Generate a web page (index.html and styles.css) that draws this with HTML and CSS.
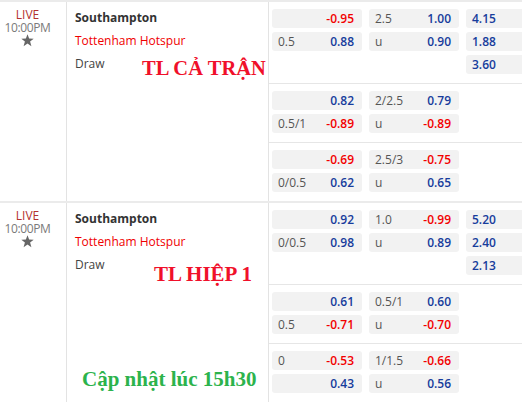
FILE: index.html
```html
<!DOCTYPE html>
<html>
<head>
<meta charset="utf-8">
<link rel="stylesheet" href="styles.css">
</head>
<body>
<div class="match">
  <div class="time">
    <div class="live">LIVE</div>
    <div class="clock">10:00PM</div>
    <svg class="star" viewBox="0 0 12 12" width="13" height="13"><path d="M6 0.3 L7.5 4.2 L11.7 4.4 L8.4 7 L9.6 11.2 L6 8.8 L2.4 11.2 L3.6 7 L0.3 4.4 L4.5 4.2 Z" fill="#666"/></svg>
  </div>
  <div class="teams">
    <div class="home">Southampton</div>
    <div class="away">Tottenham Hotspur</div>
    <div class="draw">Draw</div>
  </div>
  <div class="odds">
    <div class="sub">
      <div class="cell"><span class="lbl"></span><span class="val red">-0.95</span></div>
      <div class="cell"><span class="lbl">2.5</span><span class="val">1.00</span></div>
      <div class="cell x"><span class="val">4.15</span></div>
      <div class="cell"><span class="lbl">0.5</span><span class="val">0.88</span></div>
      <div class="cell"><span class="lbl">u</span><span class="val">0.90</span></div>
      <div class="cell x"><span class="val">1.88</span></div>
      <div class="blank"></div>
      <div class="blank"></div>
      <div class="cell x"><span class="val">3.60</span></div>
    </div>
    <div class="sub">
      <div class="cell"><span class="lbl"></span><span class="val">0.82</span></div>
      <div class="cell"><span class="lbl">2/2.5</span><span class="val">0.79</span></div>
      <div class="blank"></div>
      <div class="cell"><span class="lbl">0.5/1</span><span class="val red">-0.89</span></div>
      <div class="cell"><span class="lbl">u</span><span class="val red">-0.89</span></div>
      <div class="blank"></div>
    </div>
    <div class="sub">
      <div class="cell"><span class="lbl"></span><span class="val red">-0.69</span></div>
      <div class="cell"><span class="lbl">2.5/3</span><span class="val red">-0.75</span></div>
      <div class="blank"></div>
      <div class="cell"><span class="lbl">0/0.5</span><span class="val">0.62</span></div>
      <div class="cell"><span class="lbl">u</span><span class="val">0.65</span></div>
      <div class="blank"></div>
    </div>
  </div>
  <div class="note note-red note-1">TL CẢ TRẬN</div>
</div>

<div class="match">
  <div class="time">
    <div class="live">LIVE</div>
    <div class="clock">10:00PM</div>
    <svg class="star" viewBox="0 0 12 12" width="13" height="13"><path d="M6 0.3 L7.5 4.2 L11.7 4.4 L8.4 7 L9.6 11.2 L6 8.8 L2.4 11.2 L3.6 7 L0.3 4.4 L4.5 4.2 Z" fill="#666"/></svg>
  </div>
  <div class="teams">
    <div class="home">Southampton</div>
    <div class="away">Tottenham Hotspur</div>
    <div class="draw">Draw</div>
  </div>
  <div class="odds">
    <div class="sub">
      <div class="cell"><span class="lbl"></span><span class="val">0.92</span></div>
      <div class="cell"><span class="lbl">1.0</span><span class="val red">-0.99</span></div>
      <div class="cell x"><span class="val">5.20</span></div>
      <div class="cell"><span class="lbl">0/0.5</span><span class="val">0.98</span></div>
      <div class="cell"><span class="lbl">u</span><span class="val">0.89</span></div>
      <div class="cell x"><span class="val">2.40</span></div>
      <div class="blank"></div>
      <div class="blank"></div>
      <div class="cell x"><span class="val">2.13</span></div>
    </div>
    <div class="sub">
      <div class="cell"><span class="lbl"></span><span class="val">0.61</span></div>
      <div class="cell"><span class="lbl">0.5/1</span><span class="val">0.60</span></div>
      <div class="blank"></div>
      <div class="cell"><span class="lbl">0.5</span><span class="val red">-0.71</span></div>
      <div class="cell"><span class="lbl">u</span><span class="val red">-0.70</span></div>
      <div class="blank"></div>
    </div>
    <div class="sub">
      <div class="cell"><span class="lbl">0</span><span class="val red">-0.53</span></div>
      <div class="cell"><span class="lbl">1/1.5</span><span class="val red">-0.66</span></div>
      <div class="blank"></div>
      <div class="cell"><span class="lbl"></span><span class="val">0.43</span></div>
      <div class="cell"><span class="lbl">u</span><span class="val">0.56</span></div>
      <div class="blank"></div>
    </div>
  </div>
  <div class="note note-red note-2">TL HIỆP 1</div>
  <div class="note note-green note-3">Cập nhật lúc 15h30</div>
</div>
</body>
</html>
```

FILE: styles.css
```css
html, body {
  margin: 0;
  padding: 0;
  background: #fff;
}
body {
  width: 522px;
  height: 402px;
  overflow: hidden;
  font-family: "Open Sans", "Noto Sans", sans-serif;
  font-size: 12px;
}
.match {
  position: relative;
  display: grid;
  grid-template-columns: 67px 202px 1fr;
  border-top: 2px solid #ebebeb;
}
.time {
  border-right: 1px solid #e3e3e3;
  padding: 6px 11px 0 0;
  text-align: center;
  font-size: 12px;
  line-height: 13px;
}
.live {
  color: #b3312f;
}
.clock {
  color: #7a7a7a;
  letter-spacing: -0.4px;
}
.star {
  display: block;
  margin: 0 auto;
}
.teams {
  border-right: 1px solid #e3e3e3;
  padding: 4px 0 0 8px;
  line-height: 23px;
}
.home {
  font-weight: 700;
  color: #333;
}
.away {
  color: #f00000;
}
.draw {
  color: #444;
}
.sub {
  display: grid;
  grid-template-columns: 90px 90px 60px;
  grid-auto-rows: 19px;
  column-gap: 7px;
  row-gap: 4px;
  padding: 7px 0 9px 3px;
}
.sub + .sub {
  border-top: 1px solid #e6e6e6;
}
.cell {
  background: #f2f2f2;
  border-radius: 3px;
  display: flex;
  align-items: center;
  justify-content: space-between;
  padding: 0 8px 0 6px;
  line-height: 19px;
}
.cell.x {
  justify-content: flex-start;
}
.lbl {
  color: #555;
}
.val {
  color: #173c9c;
  font-weight: 600;
}
.val.red {
  color: #f20000;
}
.note {
  position: absolute;
  font-family: "Liberation Serif", "Times New Roman", serif;
  font-weight: 700;
  font-size: 21px;
  line-height: 21px;
  white-space: nowrap;
}
.note-red {
  color: #f0102a;
}
.note-green {
  color: #2cb34c;
}
.note-1 {
  left: 142px;
  top: 56px;
  font-size: 20.5px;
}
.note-2 {
  left: 154px;
  top: 61px;
}
.note-3 {
  left: 82px;
  top: 166px;
}
```
